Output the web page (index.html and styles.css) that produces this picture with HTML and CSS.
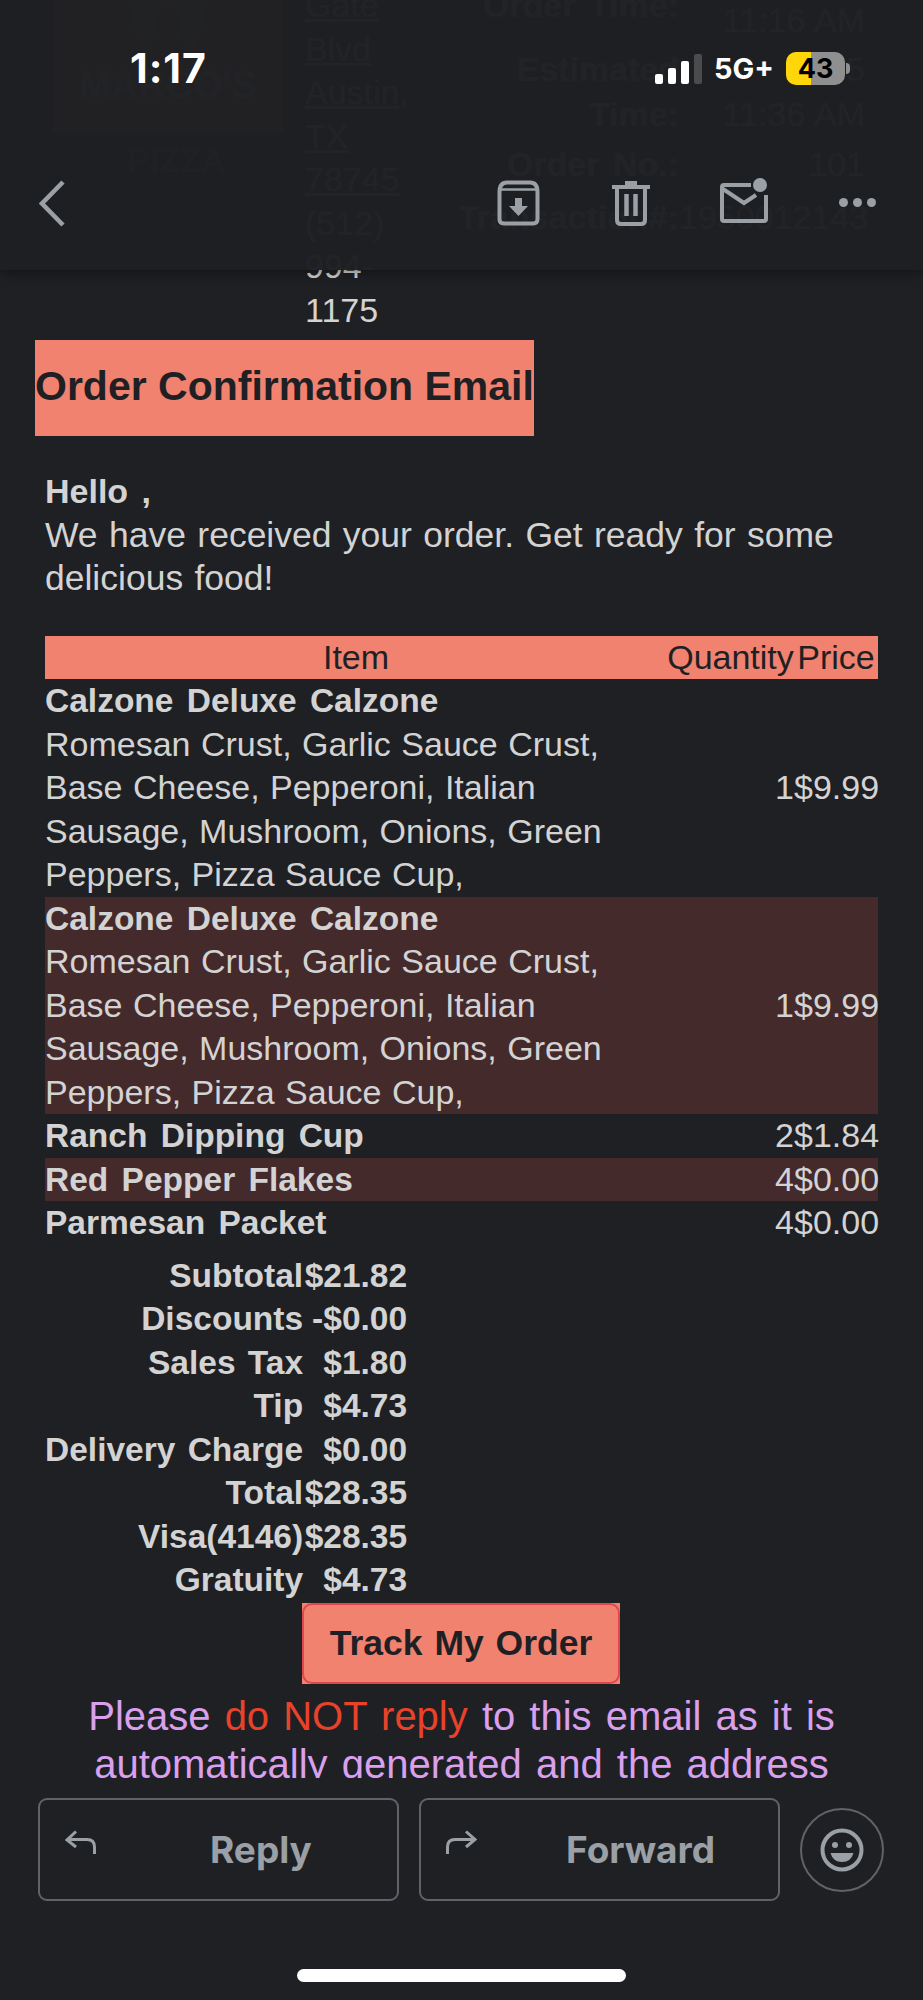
FILE: index.html
```html
<!DOCTYPE html>
<html lang="en">

<head>
    <meta charset="UTF-8">
    <meta name="viewport" content="width=device-width, initial-scale=1.0">
    <title>Order Confirmation Email</title>
    <link rel="stylesheet" href="styles.css">
</head>

<body>
    <div class="screen">

        <!-- EMAIL BODY, ALREADY SCROLLED A BIT -->
        <div class="email">
            <div class="storeInfo">
                <div class="logo">
                    <div class="logoBox">
                        <svg class="logoMark" viewBox="0 0 92 86" width="92" height="86">
                            <path d="M2 0 L44 0 L23 84 Z M48 0 L90 0 L69 84 Z" fill="#8a8a30"></path>
                        </svg>
                        <span class="logoName">MARCO'S</span>
                    </div>
                    <span class="logoSub">PIZZA</span>
                </div>
                <div class="address">
                    <a href="#">Gate</a>
                    <a href="#">Blvd</a>
                    <a href="#">Austin,</a>
                    <a href="#">TX</a>
                    <a href="#">78745</a>
                    <span>(512)</span>
                    <span>994-</span>
                    <span>1175</span>
                </div>
                <div class="orderInfo">
                    <b>Order Time:</b><span class="orderTimeValue">11:16 AM</span>
                    <b>Estimated</b><span>5</span>
                    <b>Time:</b><span>11:36 AM</span>
                    <b>Order No.:</b><span>101</span>
                    <b>Transaction#:</b><span>1950012143</span>
                </div>
            </div>

            <h1 class="title">Order Confirmation Email</h1>

            <p class="greeting"><b>Hello ,</b><br>We have received your order. Get ready for some delicious food!</p>

            <table class="items">
                <colgroup>
                    <col class="colItem">
                    <col class="colQty">
                    <col class="colPrice">
                </colgroup>
                <tr>
                    <th>Item</th>
                    <th>Quantity</th>
                    <th>Price</th>
                </tr>
                <tr>
                    <td><b>Calzone Deluxe Calzone</b><br>Romesan Crust, Garlic Sauce Crust, Base Cheese, Pepperoni, Italian Sausage, Mushroom, Onions, Green Peppers, Pizza Sauce Cup,</td>
                    <td class="num">1</td>
                    <td class="num">$9.99</td>
                </tr>
                <tr class="alt">
                    <td><b>Calzone Deluxe Calzone</b><br>Romesan Crust, Garlic Sauce Crust, Base Cheese, Pepperoni, Italian Sausage, Mushroom, Onions, Green Peppers, Pizza Sauce Cup,</td>
                    <td class="num">1</td>
                    <td class="num">$9.99</td>
                </tr>
                <tr>
                    <td><b>Ranch Dipping Cup</b></td>
                    <td class="num">2</td>
                    <td class="num">$1.84</td>
                </tr>
                <tr class="alt">
                    <td><b>Red Pepper Flakes</b></td>
                    <td class="num">4</td>
                    <td class="num">$0.00</td>
                </tr>
                <tr>
                    <td><b>Parmesan Packet</b></td>
                    <td class="num">4</td>
                    <td class="num">$0.00</td>
                </tr>
            </table>

            <table class="totals">
                <tr><td>Subtotal</td><td>$21.82</td></tr>
                <tr><td>Discounts</td><td>-$0.00</td></tr>
                <tr><td>Sales Tax</td><td>$1.80</td></tr>
                <tr><td>Tip</td><td>$4.73</td></tr>
                <tr><td>Delivery Charge</td><td>$0.00</td></tr>
                <tr><td>Total</td><td>$28.35</td></tr>
                <tr><td>Visa(4146)</td><td>$28.35</td></tr>
                <tr><td>Gratuity</td><td>$4.73</td></tr>
            </table>

            <div class="trackWrap">
                <a class="trackBtn" href="#">Track My Order</a>
            </div>

            <p class="notice">Please <span class="noticeRed">do NOT reply</span> to this email as it is automatically generated and the address</p>
        </div>

        <!-- BARRA SUPERIOR -->
        <div class="topBar">
            <div class="statusBar">
                <span class="clock">1:17</span>
                <div class="statusRight">
                    <div class="signal">
                        <i class="bar1"></i><i class="bar2"></i><i class="bar3"></i><i class="bar4"></i>
                    </div>
                    <span class="network">5G+</span>
                    <div class="battery">
                        <div class="batteryBody"><span>43</span></div>
                        <div class="batteryNub"></div>
                    </div>
                </div>
            </div>
            <div class="toolbar">
                <svg class="backIcon" viewBox="0 0 26 47" width="26" height="47">
                    <path d="M24 2 L3 23.5 L24 45" fill="none" stroke="#9aa0a6" stroke-width="4.5"></path>
                </svg>
                <div class="actions">
                    <svg viewBox="0 0 43 46" width="43" height="46">
                        <path d="M2.5 12 Q2.5 2.5 10 2.5 L33 2.5 Q40.5 2.5 40.5 12 L40.5 39 Q40.5 43.5 36 43.5 L7 43.5 Q2.5 43.5 2.5 39 Z" fill="none" stroke="#9aa0a6" stroke-width="4"></path>
                        <path d="M3 9.5 L40 9.5" stroke="#9aa0a6" stroke-width="2.5"></path>
                        <path d="M18 18 H25 V26 H31 L21.5 36 L12 26 H18 Z" fill="#9aa0a6"></path>
                    </svg>
                    <svg viewBox="0 0 38 46" width="38" height="46">
                        <path d="M0 5 H13 V1 H25 V5 H38 V9 H0 Z" fill="#9aa0a6"></path>
                        <path d="M5 8 V40 Q5 44 9 44 H29 Q33 44 33 40 V8" fill="none" stroke="#9aa0a6" stroke-width="4"></path>
                        <path d="M14.5 14 V36 M23.5 14 V36" stroke="#9aa0a6" stroke-width="4.5"></path>
                    </svg>
                    <svg viewBox="0 0 48 46" width="48" height="46">
                        <path d="M31 7 H4 Q2 7 2 9 V41 Q2 43 4 43 H44 Q46 43 46 41 V17" fill="none" stroke="#9aa0a6" stroke-width="4"></path>
                        <path d="M3 11 L24 25 L36 17" fill="none" stroke="#9aa0a6" stroke-width="4"></path>
                        <circle cx="40" cy="7" r="7" fill="#9aa0a6"></circle>
                    </svg>
                    <div class="dots"><i></i><i></i><i></i></div>
                </div>
            </div>
        </div>

        <!-- BARRA INFERIOR -->
        <div class="bottomBar">
            <div class="replyRow">
                <a class="replyBtn" href="#">
                    <svg viewBox="0 0 31 24" width="31" height="24">
                        <path d="M11 1.5 L2 10 L11 17 M2.5 9.5 H22 Q29.5 9.5 29.5 17 V24" fill="none" stroke="#9aa0a6" stroke-width="3"></path>
                    </svg>
                    <span>Reply</span>
                </a>
                <a class="replyBtn forwardBtn" href="#">
                    <svg viewBox="0 0 31 24" width="31" height="24">
                        <path d="M20 1.5 L29 9.5 L20 17 M28.5 9.5 H9 Q1.5 9.5 1.5 17 V24" fill="none" stroke="#9aa0a6" stroke-width="3"></path>
                    </svg>
                    <span>Forward</span>
                </a>
                <a class="emojiBtn" href="#">
                    <svg viewBox="0 0 44 44" width="44" height="44">
                        <circle cx="22" cy="22" r="19.5" fill="none" stroke="#9aa0a6" stroke-width="4"></circle>
                        <circle cx="15" cy="17" r="3" fill="#9aa0a6"></circle>
                        <circle cx="29" cy="17" r="3" fill="#9aa0a6"></circle>
                        <path d="M10.5 25 H33.5 Q31 34 22 34 Q13 34 10.5 25 Z" fill="#9aa0a6"></path>
                    </svg>
                </a>
            </div>
            <div class="homeBar"></div>
        </div>
    </div>
</body>

</html>
```

FILE: styles.css
```css
html, body {
    margin: 0px;
    padding: 0px;
    height: 2000px;
    overflow: hidden;
    background-color: #1f2024;
}

body {
    font-family: "Liberation Sans", Arial, sans-serif;
    color: #d3d3d3;
}

b, th {
    word-spacing: 4px;
}

.screen {
    position: relative;
    width: 923px;
    height: 2000px;
    overflow: hidden;
}

.email {
    margin-top: -16px;
    padding: 0px 35px;
    font-size: 34px;
    line-height: 43.5px;
    word-spacing: 1px;

    .storeInfo {
        display: flex;
        height: 356px;
    }

    .logo {
        width: 270px;
        padding-left: 18px;
        box-sizing: border-box;
        display: flex;
        flex-direction: column;
        align-items: flex-start;

        .logoBox {
            width: 230px;
            height: 149px;
            background-color: #803022;
            display: flex;
            flex-direction: column;
            align-items: center;
        }

        .logoMark {
            display: block;
        }

        .logoName {
            font-weight: bold;
            font-size: 38px;
            line-height: 30px;
            color: #d0d0d0;
        }

        .logoSub {
            margin: 6px 0px 0px 74px;
            font-weight: bold;
            color: #80301c;
        }
    }

    .address {
        width: 131px;
        display: flex;
        flex-direction: column;

        a {
            color: #d3d3d3;
        }
    }

    .orderInfo {
        margin-left: -5px;
        width: 434px;
        display: grid;
        grid-template-columns: 248px 186px;
        grid-template-rows: 64px 45px 50px 53px 44px;
        text-align: right;

        .orderTimeValue {
            margin-top: 15px;
        }
    }

    .title {
        display: inline-block;
        vertical-align: top;
        margin: 0px;
        height: 96px;
        background-color: #f0826f;
        color: #1f2024;
        font-size: 41px;
        line-height: 92px;
        word-spacing: 0px;
    }

    .greeting {
        margin: 34px 10px 35px 10px;
        font-size: 35.5px;
        word-spacing: 1.5px;

        b {
            font-size: 34px;
        }
    }
}

.items {
    margin-left: 10px;
    width: 833px;
    table-layout: fixed;
    border-collapse: collapse;

    .colItem { width: 622px; }
    .colQty { width: 127px; }
    .colPrice { width: 84px; }

    th {
        padding: 0px;
        font-weight: normal;
        word-spacing: 0px;
        background-color: #f0826f;
        color: #1f2024;
    }

    td {
        padding: 0px;
    }

    b {
        font-size: 33.5px;
    }

    .num {
        text-align: right;
    }

    .alt td {
        background-color: #452a2c;
    }
}

.totals {
    margin: 9px 0px 0px 10px;
    border-collapse: collapse;
    font-size: 33.5px;
    font-weight: bold;
    word-spacing: 3px;
    white-space: nowrap;

    td {
        padding: 0px;
        text-align: right;
    }

    td:first-child {
        width: 258px;
    }

    td:last-child {
        width: 104px;
    }
}

.trackWrap {
    width: 318px;
    margin: 1px 0px 0px 267px;
    background-color: #f0826f;

    .trackBtn {
        display: block;
        height: 77px;
        border: 2px solid #e0474c;
        border-radius: 10px;
        text-align: center;
        text-decoration: none;
        font-size: 35.5px;
        font-weight: bold;
        word-spacing: 2px;
        line-height: 77px;
        color: #1f2024;
    }
}

.notice {
    margin: 8px 0px 0px 0px;
    text-align: center;
    font-size: 40px;
    line-height: 48px;
    word-spacing: 3px;
    color: #d9a0ee;

    .noticeRed {
        color: #e8432a;
    }
}

/* BARRA SUPERIOR */
.topBar {
    position: absolute;
    top: 0px;
    left: 0px;
    width: 923px;
    height: 270px;
    background-color: rgba(31, 32, 35, 0.98);
    box-shadow: 0px 2px 12px rgba(0, 0, 0, 0.45);
}

.statusBar {
    display: flex;
    justify-content: space-between;
    height: 180px;

    .clock {
        margin: 44px 0px 0px 130px;
        color: white;
        font-family: Inter, sans-serif;
        font-weight: 700;
        font-size: 41px;
        letter-spacing: 1px;
        line-height: 48px;
    }

    .statusRight {
        display: flex;
        align-items: flex-start;
        margin: 52px 73px 0px 0px;
    }

    .signal {
        display: flex;
        align-items: flex-end;
        gap: 5px;
        height: 30px;
        margin-top: 2px;

        i {
            display: block;
            width: 8px;
            border-radius: 2px;
            background-color: white;
        }

        .bar1 { height: 10px; }
        .bar2 { height: 16px; }
        .bar3 { height: 23px; }
        .bar4 { height: 30px; background-color: #4a4b4d; }
    }

    .network {
        margin-left: 12px;
        color: white;
        font-family: Inter, sans-serif;
        font-weight: 700;
        font-size: 29px;
        line-height: 34px;
    }

    .battery {
        display: flex;
        align-items: center;
        margin-left: 12px;
        height: 33px;

        .batteryBody {
            width: 59px;
            height: 33px;
            border-radius: 10px;
            background: linear-gradient(to right, #ffd60a 42%, #8f8f8f 42%);
            text-align: center;
            color: black;
            font-family: Inter, sans-serif;
            font-weight: 700;
            font-size: 27px;
            line-height: 33px;
        }

        .batteryNub {
            width: 4px;
            height: 11px;
            margin-left: 1px;
            border-radius: 0px 4px 4px 0px;
            background-color: #8f8f8f;
        }
    }
}

.toolbar {
    display: flex;
    justify-content: space-between;
    align-items: flex-start;

    .backIcon {
        display: block;
        margin-left: 39px;
    }

    .actions {
        display: flex;
        align-items: flex-start;
        margin-right: 47px;

        svg {
            display: block;
        }

        svg:nth-child(2) {
            margin-left: 72px;
        }

        svg:nth-child(3) {
            margin: -2px 0px 0px 70px;
        }
    }

    .dots {
        display: flex;
        gap: 5px;
        margin: 18px 0px 0px 71px;

        i {
            display: block;
            width: 9px;
            height: 9px;
            border-radius: 50%;
            background-color: #9aa0a6;
        }
    }
}

/* BARRA INFERIOR */
.bottomBar {
    position: absolute;
    left: 0px;
    top: 1778px;
    width: 923px;
    height: 222px;
    background-color: #1f2024;
}

.replyRow {
    display: flex;
    align-items: center;
    margin: 20px 0px 0px 38px;
    gap: 20px;

    .replyBtn {
        box-sizing: border-box;
        width: 361px;
        height: 103px;
        padding: 30px 0px 0px 25px;
        display: flex;
        align-items: flex-start;
        gap: 114px;
        border: 2px solid #5f6368;
        border-radius: 9px;
        text-decoration: none;
        color: #9aa0a6;
        font-family: Inter, sans-serif;
        font-weight: 700;
        font-size: 37px;
        line-height: 40px;
    }

    .forwardBtn {
        gap: 89px;
    }

    .emojiBtn {
        box-sizing: border-box;
        width: 84px;
        height: 84px;
        display: flex;
        align-items: center;
        justify-content: center;
        border: 2px solid #5f6368;
        border-radius: 50%;
    }
}

.homeBar {
    width: 329px;
    height: 13px;
    margin: 68px 0px 0px 297px;
    border-radius: 7px;
    background-color: white;
}
```
